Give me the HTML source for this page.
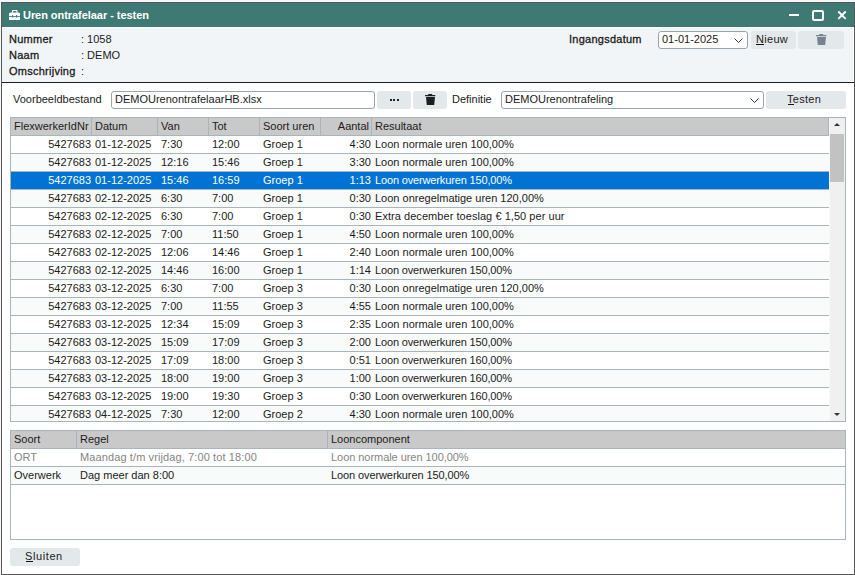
<!DOCTYPE html>
<html><head><meta charset="utf-8">
<style>
*{box-sizing:border-box;margin:0;padding:0}
html,body{width:855px;height:575px;overflow:hidden;background:#f4f6f7;font-family:"Liberation Sans",sans-serif;font-size:11px;color:#1b1b1b}
.a{position:absolute}
.t{position:absolute;white-space:pre;line-height:12px}
#win{left:1px;top:2px;width:854px;height:573px;border:1px solid #575757;background:#fff}
#title{left:2px;top:3px;width:852px;height:24px;background:#3f7973}
#panel{left:2px;top:27px;width:852px;height:55px;background:#f2f5f8;border-top:1px solid #fff;border-right:1px solid #fff}
#pline{left:2px;top:82px;width:852px;height:1px;background:#1e1e1e}
.b{-webkit-text-stroke:0.3px #1b1b1b;letter-spacing:0.25px}
.btn{position:absolute;background:#e3e8eb;border-radius:3px}
.inp{position:absolute;background:#fff;border:1px solid #98a4ae;border-radius:3px}
.grid{position:absolute;border:1px solid #a9b5bd;background:#fff}
.hdr{position:absolute;background:#c9c9c9}
.vs{position:absolute;width:1px;background:#a9b5bd}
.hs{position:absolute;height:1px;background:#a9b5bd}
.row{position:absolute;height:17px}
</style></head><body>
<div id="win" class="a"></div>
<div id="title" class="a"></div>
<svg class="a" style="left:0;top:0" width="30" height="30" viewBox="0 0 30 30">
 <path fill="#fff" d="M12 12.6V10.7Q12 10 12.7 10H16.8Q17.5 10 17.5 10.7V12.6H16.3V11.1H13.2V12.6Z"/>
 <path fill="#fff" d="M9 13.6L10.2 12.4H18.8L20 13.6V19.9H9Z"/>
 <rect x="9" y="16" width="11" height="0.8" fill="#3f7973"/>
 <ellipse cx="12.6" cy="16.4" rx="0.7" ry="1.4" fill="#3f7973"/>
 <ellipse cx="16.6" cy="16.4" rx="0.7" ry="1.4" fill="#3f7973"/>
</svg>
<div class="t" style="left:23px;top:9px;color:#fff;font-weight:bold;letter-spacing:-0.05px">Uren ontrafelaar - testen</div>
<!-- window controls -->
<div class="a" style="left:789px;top:14px;width:10px;height:2px;background:#fff"></div>
<div class="a" style="left:812px;top:10px;width:12px;height:11px;border:2px solid #fff;border-radius:2px"></div>
<svg class="a" style="left:0;top:0" width="855" height="30" viewBox="0 0 855 30"><path d="M838.3 11.5L845.7 18.9M845.7 11.5L838.3 18.9" stroke="#fff" stroke-width="1.9"/></svg>

<div id="panel" class="a"></div>
<div id="pline" class="a"></div>
<div class="t b" style="left:9px;top:33px">Nummer</div>
<div class="t b" style="left:9px;top:49px">Naam</div>
<div class="t b" style="left:9px;top:65px">Omschrijving</div>
<div class="t" style="left:81px;top:33px">: 1058</div>
<div class="t" style="left:81px;top:49px">: DEMO</div>
<div class="t" style="left:81px;top:65px">:</div>
<div class="t b" style="left:569px;top:33px">Ingangsdatum</div>
<div class="inp" style="left:658px;top:31px;width:90px;height:18px"></div>
<div class="t" style="left:662px;top:33px">01-01-2025</div>
<svg class="a" style="left:734px;top:38px" width="10" height="6" viewBox="0 0 10 6"><path d="M0.5 0.5L4.5 4.5L8.5 0.5" fill="none" stroke="#333" stroke-width="1"/></svg>
<div class="btn" style="left:751px;top:31px;width:45px;height:18px"></div>
<div class="a" style="left:756px;top:44px;width:8px;height:1px;background:#111"></div>
<div class="t" style="left:756px;top:33px;letter-spacing:0.3px">Nieuw</div>
<div class="btn" style="left:798px;top:31px;width:46px;height:18px"></div>
<svg class="a" style="left:816px;top:34px" width="12" height="12" viewBox="0 0 12 12"><path fill="#78838d" d="M3.5 0h3.4l0.5 1h2.9v1.2h-10.3v-1.2h3z M1 3h9l-0.8 8h-7.4z"/></svg>

<!-- toolbar -->
<div class="t" style="left:13px;top:93px">Voorbeeldbestand</div>
<div class="inp" style="left:111px;top:91px;width:264px;height:18px"></div>
<div class="t" style="left:115px;top:93px">DEMOUrenontrafelaarHB.xlsx</div>
<div class="btn" style="left:377px;top:91px;width:34px;height:18px"></div>
<div class="a" style="left:390px;top:99px;width:2px;height:2px;background:#222"></div>
<div class="a" style="left:393px;top:99px;width:2px;height:2px;background:#222"></div>
<div class="a" style="left:397px;top:99px;width:2px;height:2px;background:#222"></div>
<div class="btn" style="left:413px;top:91px;width:34px;height:18px"></div>
<svg class="a" style="left:425px;top:94px" width="12" height="12" viewBox="0 0 12 12"><path fill="#1c1f22" d="M3.5 0h3.4l0.5 1h2.9v1.2h-10.3v-1.2h3z M1 3h9l-0.8 8h-7.4z"/></svg>
<div class="t" style="left:452px;top:93px">Definitie</div>
<div class="inp" style="left:501px;top:91px;width:263px;height:18px"></div>
<div class="t" style="left:505px;top:93px">DEMOUrenontrafeling</div>
<svg class="a" style="left:750px;top:98px" width="10" height="6" viewBox="0 0 10 6"><path d="M0.5 0.5L4.5 4.5L8.5 0.5" fill="none" stroke="#333" stroke-width="1"/></svg>
<div class="btn" style="left:766px;top:91px;width:80px;height:18px"></div>
<div class="t" style="left:787px;top:93px;letter-spacing:0.3px">Testen</div>
<div class="a" style="left:788px;top:104px;width:6px;height:1px;background:#111"></div>

<div class="grid" style="left:10px;top:117px;width:836px;height:305px;overflow:hidden">
<div class="hdr" style="left:0;top:0;width:818px;height:17px"></div>
<div class="hs" style="left:0;top:17px;width:818px"></div>
<div class="row" style="left:0;top:18px;width:818px;background:#fff"></div>
<div class="hs" style="left:0;top:35px;width:818px"></div>
<div class="row" style="left:0;top:36px;width:818px;background:#f9fafa"></div>
<div class="hs" style="left:0;top:53px;width:818px"></div>
<div class="row" style="left:0;top:54px;width:818px;background:#0073d4"></div>
<div class="hs" style="left:0;top:71px;width:818px"></div>
<div class="row" style="left:0;top:72px;width:818px;background:#f9fafa"></div>
<div class="hs" style="left:0;top:89px;width:818px"></div>
<div class="row" style="left:0;top:90px;width:818px;background:#fff"></div>
<div class="hs" style="left:0;top:107px;width:818px"></div>
<div class="row" style="left:0;top:108px;width:818px;background:#f9fafa"></div>
<div class="hs" style="left:0;top:125px;width:818px"></div>
<div class="row" style="left:0;top:126px;width:818px;background:#fff"></div>
<div class="hs" style="left:0;top:143px;width:818px"></div>
<div class="row" style="left:0;top:144px;width:818px;background:#f9fafa"></div>
<div class="hs" style="left:0;top:161px;width:818px"></div>
<div class="row" style="left:0;top:162px;width:818px;background:#fff"></div>
<div class="hs" style="left:0;top:179px;width:818px"></div>
<div class="row" style="left:0;top:180px;width:818px;background:#f9fafa"></div>
<div class="hs" style="left:0;top:197px;width:818px"></div>
<div class="row" style="left:0;top:198px;width:818px;background:#fff"></div>
<div class="hs" style="left:0;top:215px;width:818px"></div>
<div class="row" style="left:0;top:216px;width:818px;background:#f9fafa"></div>
<div class="hs" style="left:0;top:233px;width:818px"></div>
<div class="row" style="left:0;top:234px;width:818px;background:#fff"></div>
<div class="hs" style="left:0;top:251px;width:818px"></div>
<div class="row" style="left:0;top:252px;width:818px;background:#f9fafa"></div>
<div class="hs" style="left:0;top:269px;width:818px"></div>
<div class="row" style="left:0;top:270px;width:818px;background:#fff"></div>
<div class="hs" style="left:0;top:287px;width:818px"></div>
<div class="row" style="left:0;top:288px;width:818px;background:#f9fafa"></div>
<div class="vs" style="left:80px;top:0;height:17px"></div>
<div class="vs" style="left:146px;top:0;height:17px"></div>
<div class="vs" style="left:197px;top:0;height:17px"></div>
<div class="vs" style="left:248px;top:0;height:17px"></div>
<div class="vs" style="left:309px;top:0;height:17px"></div>
<div class="vs" style="left:360px;top:0;height:17px"></div>
<div class="vs" style="left:817px;top:0;height:17px"></div>
<div class="t" style="left:3px;top:2px">FlexwerkerIdNr</div>
<div class="t" style="left:84px;top:2px">Datum</div>
<div class="t" style="left:150px;top:2px">Van</div>
<div class="t" style="left:201px;top:2px">Tot</div>
<div class="t" style="left:252px;top:2px">Soort uren</div>
<div class="t" style="left:258px;width:100px;text-align:right;top:2px">Aantal</div>
<div class="t" style="left:364px;top:2px">Resultaat</div>
<div class="t" style="left:-20px;width:100px;text-align:right;top:20px;color:#1b1b1b">5427683</div>
<div class="t" style="left:84px;top:20px;color:#1b1b1b">01-12-2025</div>
<div class="t" style="left:150px;top:20px;color:#1b1b1b">7:30</div>
<div class="t" style="left:201px;top:20px;color:#1b1b1b">12:00</div>
<div class="t" style="left:252px;top:20px;color:#1b1b1b">Groep 1</div>
<div class="t" style="left:260px;width:100px;text-align:right;top:20px;color:#1b1b1b">4:30</div>
<div class="t" style="left:364px;top:20px;color:#1b1b1b">Loon normale uren 100,00%</div>
<div class="t" style="left:-20px;width:100px;text-align:right;top:38px;color:#1b1b1b">5427683</div>
<div class="t" style="left:84px;top:38px;color:#1b1b1b">01-12-2025</div>
<div class="t" style="left:150px;top:38px;color:#1b1b1b">12:16</div>
<div class="t" style="left:201px;top:38px;color:#1b1b1b">15:46</div>
<div class="t" style="left:252px;top:38px;color:#1b1b1b">Groep 1</div>
<div class="t" style="left:260px;width:100px;text-align:right;top:38px;color:#1b1b1b">3:30</div>
<div class="t" style="left:364px;top:38px;color:#1b1b1b">Loon normale uren 100,00%</div>
<div class="t" style="left:-20px;width:100px;text-align:right;top:56px;color:#fff">5427683</div>
<div class="t" style="left:84px;top:56px;color:#fff">01-12-2025</div>
<div class="t" style="left:150px;top:56px;color:#fff">15:46</div>
<div class="t" style="left:201px;top:56px;color:#fff">16:59</div>
<div class="t" style="left:252px;top:56px;color:#fff">Groep 1</div>
<div class="t" style="left:260px;width:100px;text-align:right;top:56px;color:#fff">1:13</div>
<div class="t" style="left:364px;top:56px;color:#fff;letter-spacing:-0.15px">Loon overwerkuren 150,00%</div>
<div class="t" style="left:-20px;width:100px;text-align:right;top:74px;color:#1b1b1b">5427683</div>
<div class="t" style="left:84px;top:74px;color:#1b1b1b">02-12-2025</div>
<div class="t" style="left:150px;top:74px;color:#1b1b1b">6:30</div>
<div class="t" style="left:201px;top:74px;color:#1b1b1b">7:00</div>
<div class="t" style="left:252px;top:74px;color:#1b1b1b">Groep 1</div>
<div class="t" style="left:260px;width:100px;text-align:right;top:74px;color:#1b1b1b">0:30</div>
<div class="t" style="left:364px;top:74px;color:#1b1b1b">Loon onregelmatige uren 120,00%</div>
<div class="t" style="left:-20px;width:100px;text-align:right;top:92px;color:#1b1b1b">5427683</div>
<div class="t" style="left:84px;top:92px;color:#1b1b1b">02-12-2025</div>
<div class="t" style="left:150px;top:92px;color:#1b1b1b">6:30</div>
<div class="t" style="left:201px;top:92px;color:#1b1b1b">7:00</div>
<div class="t" style="left:252px;top:92px;color:#1b1b1b">Groep 1</div>
<div class="t" style="left:260px;width:100px;text-align:right;top:92px;color:#1b1b1b">0:30</div>
<div class="t" style="left:364px;top:92px;color:#1b1b1b;letter-spacing:0.05px">Extra december toeslag € 1,50 per uur</div>
<div class="t" style="left:-20px;width:100px;text-align:right;top:110px;color:#1b1b1b">5427683</div>
<div class="t" style="left:84px;top:110px;color:#1b1b1b">02-12-2025</div>
<div class="t" style="left:150px;top:110px;color:#1b1b1b">7:00</div>
<div class="t" style="left:201px;top:110px;color:#1b1b1b">11:50</div>
<div class="t" style="left:252px;top:110px;color:#1b1b1b">Groep 1</div>
<div class="t" style="left:260px;width:100px;text-align:right;top:110px;color:#1b1b1b">4:50</div>
<div class="t" style="left:364px;top:110px;color:#1b1b1b">Loon normale uren 100,00%</div>
<div class="t" style="left:-20px;width:100px;text-align:right;top:128px;color:#1b1b1b">5427683</div>
<div class="t" style="left:84px;top:128px;color:#1b1b1b">02-12-2025</div>
<div class="t" style="left:150px;top:128px;color:#1b1b1b">12:06</div>
<div class="t" style="left:201px;top:128px;color:#1b1b1b">14:46</div>
<div class="t" style="left:252px;top:128px;color:#1b1b1b">Groep 1</div>
<div class="t" style="left:260px;width:100px;text-align:right;top:128px;color:#1b1b1b">2:40</div>
<div class="t" style="left:364px;top:128px;color:#1b1b1b">Loon normale uren 100,00%</div>
<div class="t" style="left:-20px;width:100px;text-align:right;top:146px;color:#1b1b1b">5427683</div>
<div class="t" style="left:84px;top:146px;color:#1b1b1b">02-12-2025</div>
<div class="t" style="left:150px;top:146px;color:#1b1b1b">14:46</div>
<div class="t" style="left:201px;top:146px;color:#1b1b1b">16:00</div>
<div class="t" style="left:252px;top:146px;color:#1b1b1b">Groep 1</div>
<div class="t" style="left:260px;width:100px;text-align:right;top:146px;color:#1b1b1b">1:14</div>
<div class="t" style="left:364px;top:146px;color:#1b1b1b;letter-spacing:-0.15px">Loon overwerkuren 150,00%</div>
<div class="t" style="left:-20px;width:100px;text-align:right;top:164px;color:#1b1b1b">5427683</div>
<div class="t" style="left:84px;top:164px;color:#1b1b1b">03-12-2025</div>
<div class="t" style="left:150px;top:164px;color:#1b1b1b">6:30</div>
<div class="t" style="left:201px;top:164px;color:#1b1b1b">7:00</div>
<div class="t" style="left:252px;top:164px;color:#1b1b1b">Groep 3</div>
<div class="t" style="left:260px;width:100px;text-align:right;top:164px;color:#1b1b1b">0:30</div>
<div class="t" style="left:364px;top:164px;color:#1b1b1b">Loon onregelmatige uren 120,00%</div>
<div class="t" style="left:-20px;width:100px;text-align:right;top:182px;color:#1b1b1b">5427683</div>
<div class="t" style="left:84px;top:182px;color:#1b1b1b">03-12-2025</div>
<div class="t" style="left:150px;top:182px;color:#1b1b1b">7:00</div>
<div class="t" style="left:201px;top:182px;color:#1b1b1b">11:55</div>
<div class="t" style="left:252px;top:182px;color:#1b1b1b">Groep 3</div>
<div class="t" style="left:260px;width:100px;text-align:right;top:182px;color:#1b1b1b">4:55</div>
<div class="t" style="left:364px;top:182px;color:#1b1b1b">Loon normale uren 100,00%</div>
<div class="t" style="left:-20px;width:100px;text-align:right;top:200px;color:#1b1b1b">5427683</div>
<div class="t" style="left:84px;top:200px;color:#1b1b1b">03-12-2025</div>
<div class="t" style="left:150px;top:200px;color:#1b1b1b">12:34</div>
<div class="t" style="left:201px;top:200px;color:#1b1b1b">15:09</div>
<div class="t" style="left:252px;top:200px;color:#1b1b1b">Groep 3</div>
<div class="t" style="left:260px;width:100px;text-align:right;top:200px;color:#1b1b1b">2:35</div>
<div class="t" style="left:364px;top:200px;color:#1b1b1b">Loon normale uren 100,00%</div>
<div class="t" style="left:-20px;width:100px;text-align:right;top:218px;color:#1b1b1b">5427683</div>
<div class="t" style="left:84px;top:218px;color:#1b1b1b">03-12-2025</div>
<div class="t" style="left:150px;top:218px;color:#1b1b1b">15:09</div>
<div class="t" style="left:201px;top:218px;color:#1b1b1b">17:09</div>
<div class="t" style="left:252px;top:218px;color:#1b1b1b">Groep 3</div>
<div class="t" style="left:260px;width:100px;text-align:right;top:218px;color:#1b1b1b">2:00</div>
<div class="t" style="left:364px;top:218px;color:#1b1b1b;letter-spacing:-0.15px">Loon overwerkuren 150,00%</div>
<div class="t" style="left:-20px;width:100px;text-align:right;top:236px;color:#1b1b1b">5427683</div>
<div class="t" style="left:84px;top:236px;color:#1b1b1b">03-12-2025</div>
<div class="t" style="left:150px;top:236px;color:#1b1b1b">17:09</div>
<div class="t" style="left:201px;top:236px;color:#1b1b1b">18:00</div>
<div class="t" style="left:252px;top:236px;color:#1b1b1b">Groep 3</div>
<div class="t" style="left:260px;width:100px;text-align:right;top:236px;color:#1b1b1b">0:51</div>
<div class="t" style="left:364px;top:236px;color:#1b1b1b;letter-spacing:-0.15px">Loon overwerkuren 160,00%</div>
<div class="t" style="left:-20px;width:100px;text-align:right;top:254px;color:#1b1b1b">5427683</div>
<div class="t" style="left:84px;top:254px;color:#1b1b1b">03-12-2025</div>
<div class="t" style="left:150px;top:254px;color:#1b1b1b">18:00</div>
<div class="t" style="left:201px;top:254px;color:#1b1b1b">19:00</div>
<div class="t" style="left:252px;top:254px;color:#1b1b1b">Groep 3</div>
<div class="t" style="left:260px;width:100px;text-align:right;top:254px;color:#1b1b1b">1:00</div>
<div class="t" style="left:364px;top:254px;color:#1b1b1b;letter-spacing:-0.15px">Loon overwerkuren 160,00%</div>
<div class="t" style="left:-20px;width:100px;text-align:right;top:272px;color:#1b1b1b">5427683</div>
<div class="t" style="left:84px;top:272px;color:#1b1b1b">03-12-2025</div>
<div class="t" style="left:150px;top:272px;color:#1b1b1b">19:00</div>
<div class="t" style="left:201px;top:272px;color:#1b1b1b">19:30</div>
<div class="t" style="left:252px;top:272px;color:#1b1b1b">Groep 3</div>
<div class="t" style="left:260px;width:100px;text-align:right;top:272px;color:#1b1b1b">0:30</div>
<div class="t" style="left:364px;top:272px;color:#1b1b1b;letter-spacing:-0.15px">Loon overwerkuren 160,00%</div>
<div class="t" style="left:-20px;width:100px;text-align:right;top:290px;color:#1b1b1b">5427683</div>
<div class="t" style="left:84px;top:290px;color:#1b1b1b">04-12-2025</div>
<div class="t" style="left:150px;top:290px;color:#1b1b1b">7:30</div>
<div class="t" style="left:201px;top:290px;color:#1b1b1b">12:00</div>
<div class="t" style="left:252px;top:290px;color:#1b1b1b">Groep 2</div>
<div class="t" style="left:260px;width:100px;text-align:right;top:290px;color:#1b1b1b">4:30</div>
<div class="t" style="left:364px;top:290px;color:#1b1b1b">Loon normale uren 100,00%</div>
<div class="a" style="left:818px;top:0;width:16px;height:303px;background:#f0f0f0;border-left:1px solid #f8f8f8"></div>
<div class="a" style="left:819px;top:16px;width:14px;height:48px;background:#c2c2c2"></div>
<svg class="a" style="left:822px;top:4px" width="8" height="5" viewBox="0 0 8 5"><path d="M1 4L4 1L7 4z" fill="#333"/></svg>
<svg class="a" style="left:822px;top:294px" width="8" height="5" viewBox="0 0 8 5"><path d="M1 1L4 4L7 1z" fill="#333"/></svg>
</div>
<div class="grid" style="left:10px;top:430px;width:836px;height:110px;overflow:hidden">
<div class="hdr" style="left:0;top:0;width:834px;height:17px"></div>
<div class="vs" style="left:65px;top:0;height:17px"></div>
<div class="vs" style="left:316px;top:0;height:17px"></div>
<div class="hs" style="left:0;top:17px;width:834px"></div>
<div class="hs" style="left:0;top:35px;width:834px"></div>
<div class="hs" style="left:0;top:53px;width:834px"></div>
<div class="row" style="left:0;top:36px;width:834px;background:#f9fafa"></div>
<div class="t" style="left:3px;top:2px">Soort</div>
<div class="t" style="left:69px;top:2px">Regel</div>
<div class="t" style="left:320px;top:2px">Looncomponent</div>
<div class="t" style="left:3px;top:20px;color:#858585">ORT</div>
<div class="t" style="left:69px;top:20px;color:#858585;letter-spacing:0.11px">Maandag t/m vrijdag, 7:00 tot 18:00</div>
<div class="t" style="left:320px;top:20px;color:#858585;letter-spacing:-0.05px">Loon normale uren 100,00%</div>
<div class="t" style="left:3px;top:38px">Overwerk</div>
<div class="t" style="left:69px;top:38px">Dag meer dan 8:00</div>
<div class="t" style="left:320px;top:38px;letter-spacing:-0.1px">Loon overwerkuren 150,00%</div>
</div>

<div class="btn" style="left:10px;top:548px;width:70px;height:18px"></div>
<div class="t" style="left:25px;top:550px;letter-spacing:0.6px">Sluiten</div>
<div class="a" style="left:26px;top:561px;width:7px;height:1px;background:#111"></div>
</body></html>
